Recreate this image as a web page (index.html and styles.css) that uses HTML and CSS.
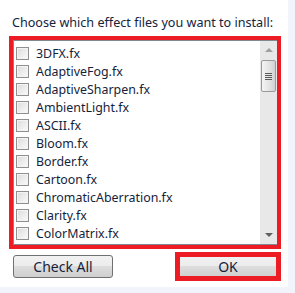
FILE: index.html
```html
<!DOCTYPE html>
<html lang="en">
<head>
<meta charset="UTF-8" />
<meta name="viewport" content="width=device-width, initial-scale=1" />
<title>Install effects</title>
<link rel="stylesheet" href="styles.css">
</head>
<body>
<div class="window">
  <p class="prompt">Choose which effect files you want to install:</p>

  <div class="highlight list-frame">
    <div class="listbox">
      <ul class="items">
        <li><span class="check"></span>3DFX.fx</li>
        <li><span class="check"></span>AdaptiveFog.fx</li>
        <li><span class="check"></span>AdaptiveSharpen.fx</li>
        <li><span class="check"></span>AmbientLight.fx</li>
        <li><span class="check"></span>ASCII.fx</li>
        <li><span class="check"></span>Bloom.fx</li>
        <li><span class="check"></span>Border.fx</li>
        <li><span class="check"></span>Cartoon.fx</li>
        <li><span class="check"></span>ChromaticAberration.fx</li>
        <li><span class="check"></span>Clarity.fx</li>
        <li><span class="check"></span>ColorMatrix.fx</li>
      </ul>
      <div class="scrollbar">
        <span class="arrow up"></span>
        <div class="thumb">
          <span class="grip"></span>
          <span class="grip"></span>
          <span class="grip"></span>
          <span class="grip"></span>
        </div>
        <span class="arrow down"></span>
      </div>
    </div>
  </div>

  <div class="buttons">
    <button class="btn">Check All</button>
    <div class="highlight ok-frame">
      <button class="btn ok">OK</button>
    </div>
  </div>
</div>
</body>
</html>
```

FILE: styles.css
```css
body {
  margin: 0;
  background: #f1f4fa;
  font-family: "Noto Sans", "Open Sans", sans-serif;
  font-size: 12.6px;
  color: #14233c;
}
.window {
  width: 288px;
  height: 287px;
  box-sizing: border-box;
  background: #fff;
  padding: 15px 0 0 9px;
}
.prompt {
  margin: 0 0 5px 3px;
  line-height: 16px;
  white-space: nowrap;
}
.highlight {
  border: 4px solid #ed1c24;
  box-sizing: border-box;
}
.list-frame {
  width: 272px;
  height: 213px;
}
.listbox {
  height: 100%;
  border: 1px solid #828790;
  border-right: none;
  box-sizing: border-box;
  display: flex;
  background: #fff;
}
.items {
  flex: 1;
  list-style: none;
  margin: 0;
  padding: 3px 0 0 2px;
  overflow: hidden;
  font-size: 12.4px;
}
.items li {
  height: 18px;
  display: flex;
  align-items: center;
  gap: 7px;
  white-space: nowrap;
}
.check {
  width: 13px;
  height: 13px;
  box-sizing: border-box;
  border: 1px solid #8f8f8f;
  background: linear-gradient(135deg, #dcdcdc, #fbfbfb);
  box-shadow: inset 0 0 0 1px #f4f4f4;
  flex-shrink: 0;
}
.scrollbar {
  width: 17px;
  background: #e8e8e8;
  display: flex;
  flex-direction: column;
  align-items: center;
  padding: 7px 0;
  box-sizing: border-box;
}
.arrow {
  width: 0;
  height: 0;
  border-left: 4px solid transparent;
  border-right: 4px solid transparent;
}
.arrow.up {
  border-bottom: 4px solid #a0a0a0;
  margin-bottom: 8px;
}
.arrow.down {
  border-top: 4px solid #606060;
  margin-top: auto;
}
.thumb {
  width: 15px;
  height: 32px;
  box-sizing: border-box;
  border: 1px solid #9a9a9a;
  border-radius: 2px;
  background: linear-gradient(90deg, #f4f4f4, #e2e2e2 60%, #d0d0d0);
  display: flex;
  flex-direction: column;
  align-items: center;
  justify-content: center;
  gap: 1px;
}
.grip {
  width: 7px;
  height: 1px;
  background: #5a5a5a;
}
.buttons {
  display: flex;
  justify-content: space-between;
  align-items: center;
  width: 272px;
  margin-top: 3px;
}
.btn {
  font-family: inherit;
  font-size: 14px;
  color: #14233c;
  height: 23px;
  border: 1px solid #707070;
  border-radius: 3px;
  background: linear-gradient(#f2f2f2 0%, #ebebeb 50%, #dddddd 50%, #cfcfcf 100%);
  padding: 0;
}
.buttons > .btn {
  width: 100px;
  margin-left: 4px;
}
.ok-frame {
  width: 106px;
  height: 29px;
  border-width: 5px;
  display: flex;
  align-items: center;
  justify-content: center;
  overflow: hidden;
}
.btn.ok {
  width: 100px;
  flex-shrink: 0;
}
```
